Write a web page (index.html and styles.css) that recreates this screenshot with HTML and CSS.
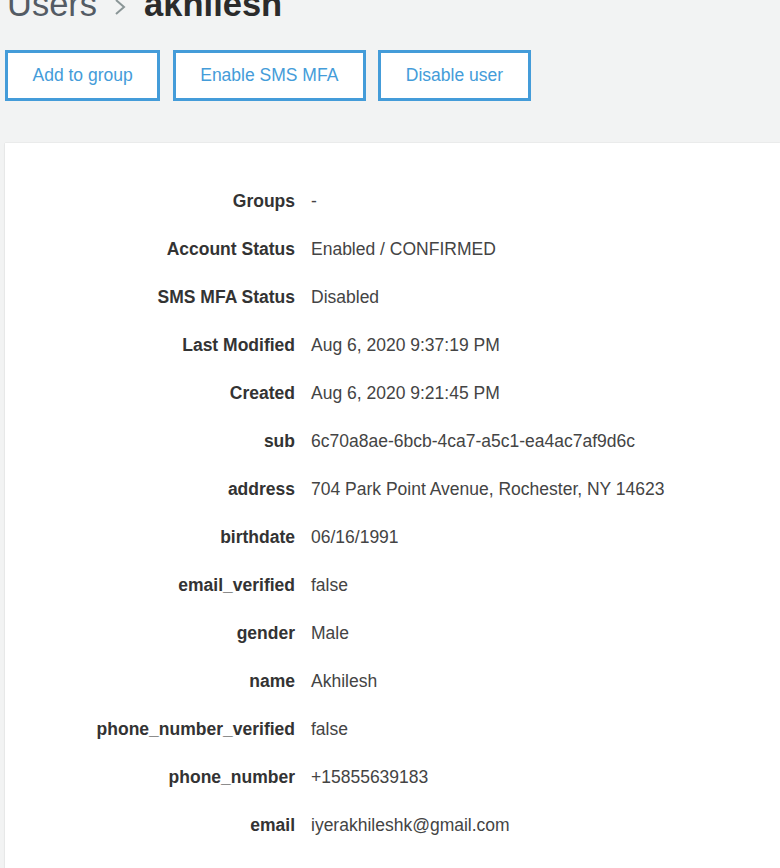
FILE: index.html
```html
<!DOCTYPE html>
<html>
<head>
<meta charset="utf-8">
<link rel="stylesheet" href="styles.css">
</head>
<body>
<div class="page">
  <h1 class="title">
    <span class="crumb">Users</span>
    <svg class="chev" width="14" height="16" viewBox="0 0 14 16"><polyline points="3,1 11,8 3,15" fill="none" stroke="#8a9596" stroke-width="2"/></svg>
    <span class="current">akhilesh</span>
  </h1>
  <div class="actions">
    <button class="btn">Add to group</button>
    <button class="btn">Enable SMS MFA</button>
    <button class="btn">Disable user</button>
  </div>
  <div class="card">
    <dl class="details">
      <dt>Groups</dt><dd>-</dd>
      <dt>Account Status</dt><dd>Enabled / CONFIRMED</dd>
      <dt>SMS MFA Status</dt><dd>Disabled</dd>
      <dt>Last Modified</dt><dd>Aug 6, 2020 9:37:19 PM</dd>
      <dt>Created</dt><dd>Aug 6, 2020 9:21:45 PM</dd>
      <dt>sub</dt><dd>6c70a8ae-6bcb-4ca7-a5c1-ea4ac7af9d6c</dd>
      <dt>address</dt><dd>704 Park Point Avenue, Rochester, NY 14623</dd>
      <dt>birthdate</dt><dd>06/16/1991</dd>
      <dt>email_verified</dt><dd>false</dd>
      <dt>gender</dt><dd>Male</dd>
      <dt>name</dt><dd>Akhilesh</dd>
      <dt>phone_number_verified</dt><dd>false</dd>
      <dt>phone_number</dt><dd>+15855639183</dd>
      <dt>email</dt><dd>iyerakhileshk@gmail.com</dd>
    </dl>
  </div>
</div>
</body>
</html>
```
FILE: styles.css
```css
html, body {
  margin: 0;
  padding: 0;
  background: #f2f3f3;
  font-family: "Liberation Sans", Arial, sans-serif;
  overflow: hidden;
}
.page {
  padding-left: 5px;
}
.title {
  margin: -13px 0 0 2px;
  font-size: 34.5px;
  line-height: 34.5px;
  font-weight: normal;
  display: flex;
  align-items: baseline;
  white-space: nowrap;
}
.crumb {
  color: #545b64;
}
.chev {
  margin: 12px 17px 0 16px;
  align-self: flex-start;
}
.current {
  font-weight: bold;
  color: #2b2b2b;
}
.actions {
  display: flex;
  gap: 12.5px;
  margin-top: 28px;
}
.btn {
  height: 51px;
  padding: 0 24.5px;
  border: 3px solid #449cd9;
  background: #fff;
  color: #449cd9;
  font-family: "Liberation Sans", Arial, sans-serif;
  font-size: 17.5px;
  box-sizing: border-box;
}
.card {
  margin-top: 42px;
  background: #fff;
  box-shadow: 0 0 1px rgba(0,0,0,0.18), 0 1px 2px rgba(0,0,0,0.06);
  padding-top: 34px;
  min-height: 760px;
}
.details {
  display: grid;
  grid-template-columns: 290px 1fr;
  column-gap: 16px;
  margin: 0;
  font-size: 17.5px;
  line-height: 48px;
}
.details dt {
  text-align: right;
  font-weight: bold;
  color: #333;
  white-space: nowrap;
}
.details dd {
  margin: 0;
  color: #444;
  white-space: nowrap;
}
```
